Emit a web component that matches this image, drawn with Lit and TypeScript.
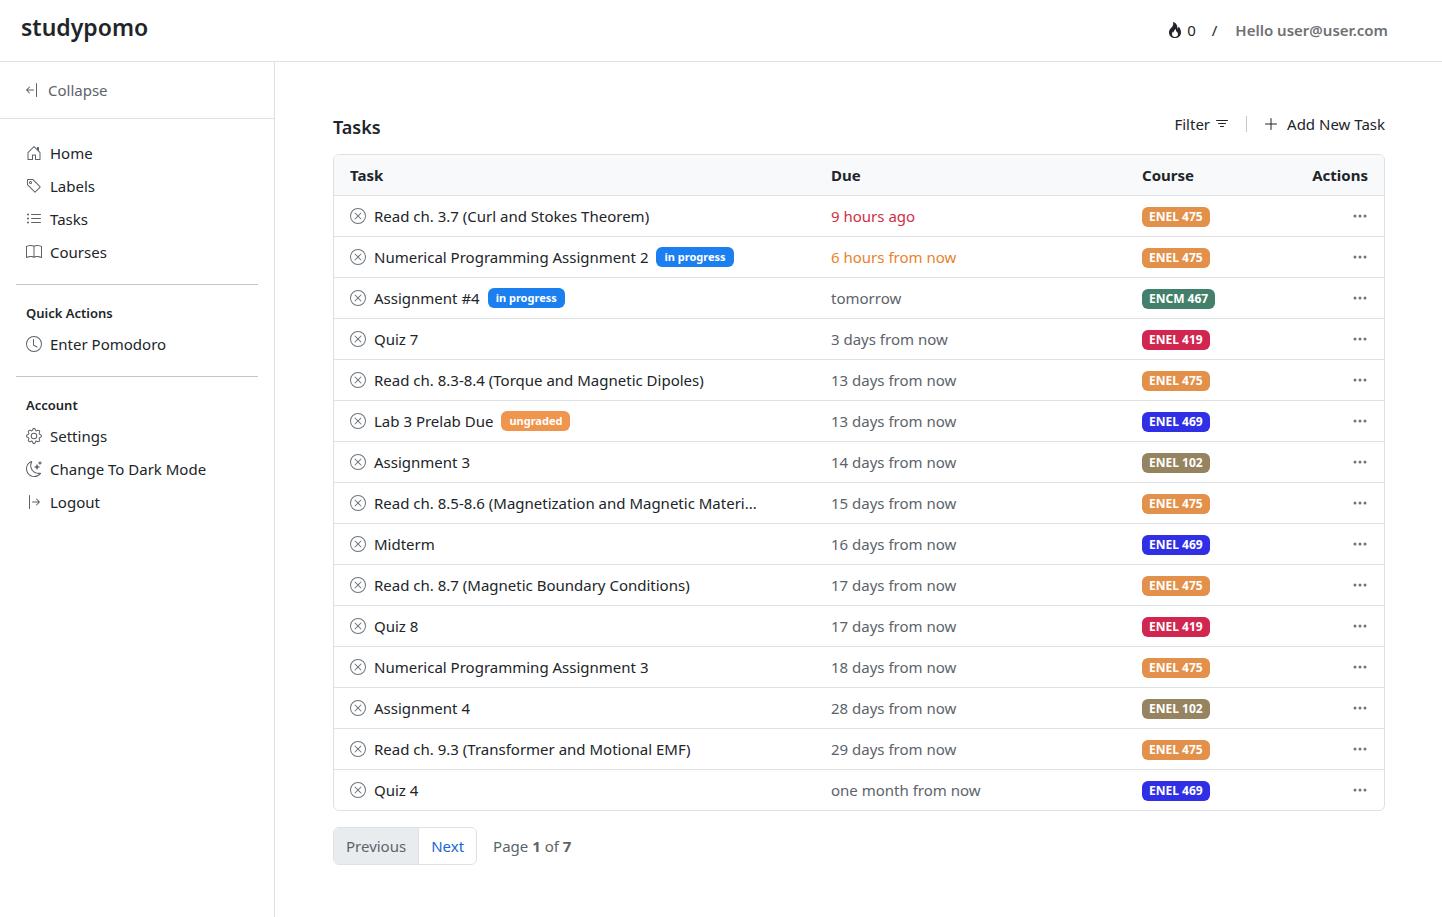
import { LitElement, html, css, svg } from "lit";
import { customElement, property, state } from "lit/decorators.js";
import { classMap } from "lit/directives/class-map.js";

const ICONS: Record<string, string[]> = {
  fire: [
    "M8 16c3.314 0 6-2 6-5.5 0-1.5-.5-4-2.5-6 .25 1.5-1.25 2-1.25 2C11 4 9 .5 6 0c.357 2 .5 4-2 6-1.25 1-2 2.729-2 4.5C2 14 4.686 16 8 16m0-1c-1.657 0-3-1-3-2.75 0-.75.25-2 1.25-3C6.125 10 7 10.5 7 10.5c-.375-1.25.5-3.25 2-3.5-.179 1-.25 2 1 3 .625.5 1 1.364 1 2.25C11 14 9.657 15 8 15",
  ],
  collapse: [
    "M12.5 15a.5.5 0 0 1-.5-.5v-13a.5.5 0 0 1 1 0v13a.5.5 0 0 1-.5.5M10 8a.5.5 0 0 1-.5.5H3.707l2.147 2.146a.5.5 0 0 1-.708.708l-3-3a.5.5 0 0 1 0-.708l3-3a.5.5 0 1 1 .708.708L3.707 7.5H9.5a.5.5 0 0 1 .5.5",
  ],
  logout: [
    "M6 8a.5.5 0 0 0 .5.5h5.793l-2.147 2.146a.5.5 0 0 0 .708.708l3-3a.5.5 0 0 0 0-.708l-3-3a.5.5 0 0 0-.708.708L12.293 7.5H6.5A.5.5 0 0 0 6 8m-2.5 7a.5.5 0 0 1-.5-.5v-13a.5.5 0 0 1 1 0v13a.5.5 0 0 1-.5.5",
  ],
  home: [
    "M8.354 1.146a.5.5 0 0 0-.708 0l-6 6A.5.5 0 0 0 1.5 7.5v7a.5.5 0 0 0 .5.5h4.5a.5.5 0 0 0 .5-.5v-4h2v4a.5.5 0 0 0 .5.5H14a.5.5 0 0 0 .5-.5v-7a.5.5 0 0 0-.146-.354L13 5.793V2.5a.5.5 0 0 0-.5-.5h-1a.5.5 0 0 0-.5.5v1.293zM2.5 14V7.707l5.5-5.5 5.5 5.5V14H10v-4a.5.5 0 0 0-.5-.5h-3a.5.5 0 0 0-.5.5v4z",
  ],
  tag: [
    "M6 4.5a1.5 1.5 0 1 1-3 0 1.5 1.5 0 0 1 3 0m-1 0a.5.5 0 1 0-1 0 .5.5 0 0 0 1 0",
    "M2 1h4.586a1 1 0 0 1 .707.293l7 7a1 1 0 0 1 0 1.414l-4.586 4.586a1 1 0 0 1-1.414 0l-7-7A1 1 0 0 1 1 6.586V2a1 1 0 0 1 1-1m0 5.586 7 7L13.586 9l-7-7H2z",
  ],
  list: [
    "M5 11.5a.5.5 0 0 1 .5-.5h9a.5.5 0 0 1 0 1h-9a.5.5 0 0 1-.5-.5m0-4a.5.5 0 0 1 .5-.5h9a.5.5 0 0 1 0 1h-9a.5.5 0 0 1-.5-.5m0-4a.5.5 0 0 1 .5-.5h9a.5.5 0 0 1 0 1h-9a.5.5 0 0 1-.5-.5m-3 1a1 1 0 1 0 0-2 1 1 0 0 0 0 2m0 4a1 1 0 1 0 0-2 1 1 0 0 0 0 2m0 4a1 1 0 1 0 0-2 1 1 0 0 0 0 2",
  ],
  book: [
    "M1 2.828c.885-.37 2.154-.769 3.388-.893 1.33-.134 2.458.063 3.112.752v9.746c-.935-.53-2.12-.603-3.213-.493-1.18.12-2.37.461-3.287.811zm7.5-.141c.654-.689 1.782-.886 3.112-.752 1.234.124 2.503.523 3.388.893v9.923c-.918-.35-2.107-.692-3.287-.81-1.094-.111-2.278-.039-3.213.492zM8 1.783C7.015.936 5.587.81 4.287.94c-1.514.153-3.042.672-3.994 1.105A.5.5 0 0 0 0 2.5v11a.5.5 0 0 0 .707.455c.882-.4 2.303-.881 3.68-1.02 1.409-.142 2.59.087 3.223.877a.5.5 0 0 0 .78 0c.633-.79 1.814-1.019 3.222-.877 1.378.139 2.8.62 3.681 1.02A.5.5 0 0 0 16 13.5v-11a.5.5 0 0 0-.293-.455c-.952-.433-2.48-.952-3.994-1.105C10.413.809 8.985.936 8 1.783",
  ],
  clock: [
    "M8 3.5a.5.5 0 0 0-1 0V9a.5.5 0 0 0 .252.434l3.5 2a.5.5 0 0 0 .496-.868L8 8.71z",
    "M8 16A8 8 0 1 0 8 0a8 8 0 0 0 0 16m7-8A7 7 0 1 1 1 8a7 7 0 0 1 14 0",
  ],
  gear: [
    "M8 4.754a3.246 3.246 0 1 0 0 6.492 3.246 3.246 0 0 0 0-6.492M5.754 8a2.246 2.246 0 1 1 4.492 0 2.246 2.246 0 0 1-4.492 0",
    "M9.796 1.343c-.527-1.79-3.065-1.79-3.592 0l-.094.319a.873.873 0 0 1-1.255.52l-.292-.16c-1.64-.892-3.433.902-2.54 2.541l.159.292a.873.873 0 0 1-.52 1.255l-.319.094c-1.79.527-1.79 3.065 0 3.592l.319.094a.873.873 0 0 1 .52 1.255l-.16.292c-.892 1.64.901 3.434 2.541 2.54l.292-.159a.873.873 0 0 1 1.255.52l.094.319c.527 1.79 3.065 1.79 3.592 0l.094-.319a.873.873 0 0 1 1.255-.52l.292.16c1.64.893 3.434-.902 2.54-2.541l-.159-.292a.873.873 0 0 1 .52-1.255l.319-.094c1.79-.527 1.79-3.065 0-3.592l-.319-.094a.873.873 0 0 1-.52-1.255l.16-.292c.893-1.64-.902-3.433-2.541-2.54l-.292.159a.873.873 0 0 1-1.255-.52zm-2.633.283c.246-.835 1.428-.835 1.674 0l.094.319a1.873 1.873 0 0 0 2.693 1.115l.291-.16c.764-.415 1.6.42 1.184 1.185l-.159.292a1.873 1.873 0 0 0 1.116 2.692l.318.094c.835.246.835 1.428 0 1.674l-.319.094a1.873 1.873 0 0 0-1.115 2.693l.16.291c.415.764-.42 1.6-1.185 1.184l-.291-.159a1.873 1.873 0 0 0-2.693 1.116l-.094.318c-.246.835-1.428.835-1.674 0l-.094-.319a1.873 1.873 0 0 0-2.692-1.115l-.292.16c-.764.415-1.6-.42-1.184-1.185l.159-.291A1.873 1.873 0 0 0 1.945 8.93l-.319-.094c-.835-.246-.835-1.428 0-1.674l.319-.094A1.873 1.873 0 0 0 3.06 4.377l-.16-.292c-.415-.764.42-1.6 1.185-1.184l.292.159a1.873 1.873 0 0 0 2.692-1.115z",
  ],
  moon: [
    "M6 .278a.77.77 0 0 1 .08.858 7.2 7.2 0 0 0-.878 3.46c0 4.021 3.278 7.277 7.318 7.277q.792-.001 1.533-.16a.79.79 0 0 1 .81.316.73.73 0 0 1-.031.893A8.35 8.35 0 0 1 8.344 16C3.734 16 0 12.286 0 7.71 0 4.266 2.114 1.312 5.124.06A.75.75 0 0 1 6 .278M4.858 1.311A7.27 7.27 0 0 0 1.025 7.71c0 4.02 3.279 7.276 7.319 7.276a7.32 7.32 0 0 0 5.205-2.162q-.506.063-1.029.063c-4.61 0-8.343-3.714-8.343-8.29 0-1.167.242-2.278.681-3.286",
    "M10.794 3.148a.217.217 0 0 1 .412 0l.387 1.162c.173.518.579.924 1.097 1.097l1.162.387a.217.217 0 0 1 0 .412l-1.162.387a1.73 1.73 0 0 0-1.097 1.097l-.387 1.162a.217.217 0 0 1-.412 0l-.387-1.162A1.73 1.73 0 0 0 9.31 6.593l-1.162-.387a.217.217 0 0 1 0-.412l1.162-.387a1.73 1.73 0 0 0 1.097-1.097zM13.863.099a.145.145 0 0 1 .274 0l.258.774c.115.346.386.617.732.732l.774.258a.145.145 0 0 1 0 .274l-.774.258a1.16 1.16 0 0 0-.732.732l-.258.774a.145.145 0 0 1-.274 0l-.258-.774a1.16 1.16 0 0 0-.732-.732l-.774-.258a.145.145 0 0 1 0-.274l.774-.258c.346-.115.617-.386.732-.732z",
  ],
  filter: [
    "M6 10.5a.5.5 0 0 1 .5-.5h3a.5.5 0 0 1 0 1h-3a.5.5 0 0 1-.5-.5m-2-3a.5.5 0 0 1 .5-.5h7a.5.5 0 0 1 0 1h-7a.5.5 0 0 1-.5-.5m-2-3a.5.5 0 0 1 .5-.5h11a.5.5 0 0 1 0 1h-11a.5.5 0 0 1-.5-.5",
  ],
  plus: [
    "M8 2a.5.5 0 0 1 .5.5v5h5a.5.5 0 0 1 0 1h-5v5a.5.5 0 0 1-1 0v-5h-5a.5.5 0 0 1 0-1h5v-5A.5.5 0 0 1 8 2",
  ],
  close: [
    "M8 15A7 7 0 1 1 8 1a7 7 0 0 1 0 14m0 1A8 8 0 1 0 8 0a8 8 0 0 0 0 16",
    "M4.646 4.646a.5.5 0 0 1 .708 0L8 7.293l2.646-2.647a.5.5 0 0 1 .708.708L8.707 8l2.647 2.646a.5.5 0 0 1-.708.708L8 8.707l-2.646 2.647a.5.5 0 0 1-.708-.708L7.293 8 4.646 5.354a.5.5 0 0 1 0-.708",
  ],
  dots: [
    "M3 9.5a1.5 1.5 0 1 1 0-3 1.5 1.5 0 0 1 0 3m5 0a1.5 1.5 0 1 1 0-3 1.5 1.5 0 0 1 0 3m5 0a1.5 1.5 0 1 1 0-3 1.5 1.5 0 0 1 0 3",
  ],
};

const icon = (name: string) => html`<svg
  class="icon"
  viewBox="0 0 16 16"
  fill="currentColor"
  aria-hidden="true"
>
  ${ICONS[name].map((d) => svg`<path d=${d}></path>`)}
</svg>`;

const shared = css`
  *,
  *::before,
  *::after {
    box-sizing: border-box;
  }
  .icon {
    display: block;
    width: 16px;
    height: 16px;
    flex: none;
  }
  a {
    color: inherit;
    text-decoration: none;
  }
  button {
    margin: 0;
    padding: 0;
    border: 0;
    background: none;
    color: inherit;
    font: inherit;
    cursor: pointer;
  }
`;

interface Task {
  name: string;
  due: string;
  course: string;
  tone?: "late" | "soon";
  status?: "in progress" | "ungraded";
}

const COURSE_CLASS: Record<string, string> = {
  "ENEL 475": "orange",
  "ENCM 467": "green",
  "ENEL 419": "crimson",
  "ENEL 469": "blue",
  "ENEL 102": "olive",
};

const TASKS: Task[] = [
  { name: "Read ch. 3.7 (Curl and Stokes Theorem)", due: "9 hours ago", course: "ENEL 475", tone: "late" },
  { name: "Numerical Programming Assignment 2", due: "6 hours from now", course: "ENEL 475", tone: "soon", status: "in progress" },
  { name: "Assignment #4", due: "tomorrow", course: "ENCM 467", status: "in progress" },
  { name: "Quiz 7", due: "3 days from now", course: "ENEL 419" },
  { name: "Read ch. 8.3-8.4 (Torque and Magnetic Dipoles)", due: "13 days from now", course: "ENEL 475" },
  { name: "Lab 3 Prelab Due", due: "13 days from now", course: "ENEL 469", status: "ungraded" },
  { name: "Assignment 3", due: "14 days from now", course: "ENEL 102" },
  { name: "Read ch. 8.5-8.6 (Magnetization and Magnetic Materi...", due: "15 days from now", course: "ENEL 475" },
  { name: "Midterm", due: "16 days from now", course: "ENEL 469" },
  { name: "Read ch. 8.7 (Magnetic Boundary Conditions)", due: "17 days from now", course: "ENEL 475" },
  { name: "Quiz 8", due: "17 days from now", course: "ENEL 419" },
  { name: "Numerical Programming Assignment 3", due: "18 days from now", course: "ENEL 475" },
  { name: "Assignment 4", due: "28 days from now", course: "ENEL 102" },
  { name: "Read ch. 9.3 (Transformer and Motional EMF)", due: "29 days from now", course: "ENEL 475" },
  { name: "Quiz 4", due: "one month from now", course: "ENEL 469" },
];

@customElement("side-nav")
export class SideNav extends LitElement {
  static styles = [
    shared,
    css`
      :host {
        display: block;
        border-right: 1px solid #dee2e6;
      }
      .top {
        display: flex;
        align-items: center;
        height: 57px;
        padding: 0 24px;
        border-bottom: 1px solid #dee2e6;
      }
      .collapse {
        display: flex;
        align-items: center;
        gap: 8px;
        color: #5c636a;
      }
      .nav {
        padding: 17px 16px;
      }
      .list {
        margin: 0;
        padding: 0 0 0 10px;
        list-style: none;
      }
      .item {
        display: flex;
        align-items: center;
        gap: 8px;
        width: 100%;
        height: 33px;
        text-align: left;
      }
      .item .icon {
        color: #5c636a;
      }
      .rule {
        height: 1px;
        margin: 16px 0;
        border: 0;
        background: #c4c6c8;
      }
      .heading {
        margin: 0;
        padding: 0 0 2px 10px;
        font-size: 13px;
        font-weight: 600;
        line-height: 24px;
      }
    `,
  ];

  private link(name: string, label: string) {
    return html`<li><a class="item" href="#">${icon(name)}<span>${label}</span></a></li>`;
  }

  private action(name: string, label: string) {
    return html`<li>
      <button class="item" type="button">${icon(name)}<span>${label}</span></button>
    </li>`;
  }

  render() {
    return html`
      <div class="top">
        <button class="collapse" type="button">${icon("collapse")}<span>Collapse</span></button>
      </div>
      <nav class="nav">
        <ul class="list">
          ${this.link("home", "Home")} ${this.link("tag", "Labels")}
          ${this.link("list", "Tasks")} ${this.link("book", "Courses")}
        </ul>
        <hr class="rule" />
        <h2 class="heading">Quick Actions</h2>
        <ul class="list">
          ${this.link("clock", "Enter Pomodoro")}
        </ul>
        <hr class="rule" />
        <h2 class="heading">Account</h2>
        <ul class="list">
          ${this.link("gear", "Settings")} ${this.action("moon", "Change To Dark Mode")}
          ${this.action("logout", "Logout")}
        </ul>
      </nav>
    `;
  }
}

@customElement("task-table")
export class TaskTable extends LitElement {
  @property({ attribute: false }) tasks: Task[] = [];

  static styles = [
    shared,
    css`
      :host {
        display: block;
        overflow: hidden;
        border: 1px solid #dee2e6;
        border-radius: 6px;
      }
      .table {
        width: 100%;
        border-collapse: separate;
        border-spacing: 0;
        table-layout: fixed;
      }
      .col-due {
        width: 311px;
      }
      .col-course {
        width: 140px;
      }
      .col-actions {
        width: 118px;
      }
      .cell {
        height: 41px;
        padding: 0 16px;
        border-bottom: 1px solid #dee2e6;
        text-align: left;
        vertical-align: middle;
      }
      .row:last-child .cell {
        height: 40px;
        border-bottom: 0;
      }
      .head {
        background: #f8f9fa;
        font-weight: 700;
      }
      .end {
        text-align: right;
      }
      .course {
        padding-top: 2px;
      }
      .task {
        display: flex;
        align-items: center;
        gap: 8px;
        white-space: nowrap;
      }
      .round,
      .more {
        color: #6c757d;
      }
      .more {
        display: block;
        margin-left: auto;
      }
      .due {
        color: #5c636a;
      }
      .late {
        color: #cf3045;
      }
      .soon {
        color: #e8822e;
      }
      .badge {
        display: block;
        width: fit-content;
        padding: 0 7px;
        border-radius: 6px;
        color: #fff;
        font-size: 12px;
        font-weight: 700;
        line-height: 20px;
      }
      .status {
        font-size: 11px;
        padding: 0 8px;
      }
      .progress {
        background: #1b7ff0;
      }
      .ungraded {
        background: #f0954e;
      }
      .orange {
        background: #e2904a;
      }
      .green {
        background: #43806b;
      }
      .crimson {
        background: #d1264f;
      }
      .blue {
        background: #302fe6;
      }
      .olive {
        background: #968460;
      }
    `,
  ];

  private row(task: Task) {
    const status = {
      badge: true,
      status: true,
      progress: task.status === "in progress",
      ungraded: task.status === "ungraded",
    };
    return html`<tr class="row">
      <td class="cell">
        <div class="task">
          <button class="round" type="button" aria-label="Complete task">${icon("close")}</button>
          <span>${task.name}</span>
          ${task.status ? html`<span class=${classMap(status)}>${task.status}</span>` : null}
        </div>
      </td>
      <td class="cell due ${task.tone ?? ""}">${task.due}</td>
      <td class="cell course"><span class="badge ${COURSE_CLASS[task.course]}">${task.course}</span></td>
      <td class="cell">
        <button class="more" type="button" aria-label="Task actions">${icon("dots")}</button>
      </td>
    </tr>`;
  }

  render() {
    return html`<table class="table">
      <colgroup>
        <col />
        <col class="col-due" />
        <col class="col-course" />
        <col class="col-actions" />
      </colgroup>
      <thead>
        <tr>
          <th class="cell head" scope="col">Task</th>
          <th class="cell head" scope="col">Due</th>
          <th class="cell head" scope="col">Course</th>
          <th class="cell head end" scope="col">Actions</th>
        </tr>
      </thead>
      <tbody>
        ${this.tasks.map((task) => this.row(task))}
      </tbody>
    </table>`;
  }
}

@customElement("app-root")
export class AppRoot extends LitElement {
  @state() private page = 1;
  private readonly pages = 7;

  static styles = [
    shared,
    css`
      :host {
        display: flex;
        flex-direction: column;
        min-height: 100vh;
        background: #fff;
        color: #212529;
        font-family: "Noto Sans", "Open Sans", sans-serif;
        font-size: 15px;
        line-height: 24px;
      }
      .header {
        display: flex;
        align-items: center;
        justify-content: space-between;
        height: 62px;
        padding: 0 54px 0 21px;
        border-bottom: 1px solid #dee2e6;
      }
      .brand {
        padding-bottom: 8px;
        font-size: 23px;
        font-weight: 600;
        line-height: 28px;
      }
      .user {
        display: flex;
        align-items: center;
        padding-bottom: 2px;
      }
      .streak {
        display: flex;
        align-items: center;
        gap: 4px;
      }
      .slash {
        margin: 0 18px 0 16px;
      }
      .hello {
        color: #6f7072;
        font-weight: 600;
      }
      .body {
        display: grid;
        grid-template-columns: 275px minmax(0, 1fr);
        flex: 1;
      }
      .main {
        padding: 50px 57px 50px 58px;
      }
      .bar {
        display: flex;
        align-items: flex-start;
        justify-content: space-between;
        height: 42px;
      }
      .title {
        margin: 0;
        padding-top: 3px;
        font-size: 18px;
        font-weight: 600;
        line-height: 24px;
      }
      .tools {
        display: flex;
        align-items: center;
      }
      .tool {
        display: flex;
        align-items: center;
        gap: 4px;
      }
      .add {
        gap: 8px;
      }
      .divider {
        width: 1px;
        height: 16px;
        margin: 0 16px;
        background: #c4c6c8;
      }
      .pager {
        display: flex;
        align-items: center;
        gap: 16px;
        margin-top: 16px;
        color: #5c636a;
      }
      .buttons {
        display: flex;
        overflow: hidden;
        border: 1px solid #dee2e6;
        border-radius: 6px;
      }
      .step {
        height: 36px;
        padding: 0 12px;
        color: #1a66d6;
      }
      .step:disabled {
        background: #e9ecef;
        color: #5c636a;
        cursor: default;
      }
      .step + .step {
        border-left: 1px solid #dee2e6;
      }
    `,
  ];

  render() {
    return html`
      <header class="header">
        <a class="brand" href="#">studypomo</a>
        <div class="user">
          <span class="streak">${icon("fire")}<span>0</span></span>
          <span class="slash">/</span>
          <span class="hello">Hello user@user.com</span>
        </div>
      </header>
      <div class="body">
        <side-nav></side-nav>
        <main class="main">
          <div class="bar">
            <h1 class="title">Tasks</h1>
            <div class="tools">
              <button class="tool" type="button"><span>Filter</span>${icon("filter")}</button>
              <span class="divider"></span>
              <button class="tool add" type="button">${icon("plus")}<span>Add New Task</span></button>
            </div>
          </div>
          <task-table .tasks=${TASKS}></task-table>
          <div class="pager">
            <div class="buttons">
              <button
                class="step"
                type="button"
                ?disabled=${this.page === 1}
                @click=${() => (this.page -= 1)}
              >
                Previous
              </button>
              <button
                class="step"
                type="button"
                ?disabled=${this.page === this.pages}
                @click=${() => (this.page += 1)}
              >
                Next
              </button>
            </div>
            <span>Page <b>${this.page}</b> of <b>${this.pages}</b></span>
          </div>
        </main>
      </div>
    `;
  }
}
